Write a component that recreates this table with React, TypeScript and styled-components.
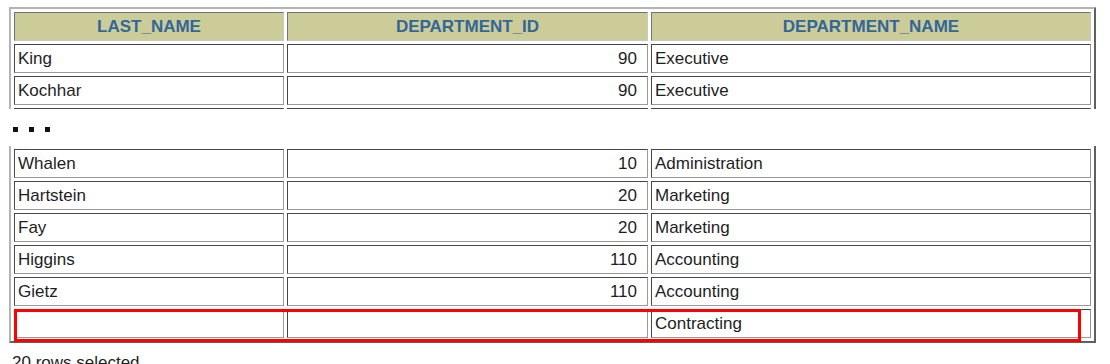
import styled, { createGlobalStyle } from "styled-components";

const GlobalStyle = createGlobalStyle`
  html, body {
    margin: 0;
    padding: 0;
    background: #ffffff;
  }
  body {
    font-family: "Liberation Sans", Arial, sans-serif;
  }
`;

const Page = styled.div`
  width: 1110px;
  height: 364px;
  overflow: hidden;
  box-sizing: border-box;
  padding: 7px 0 0 9px;
  display: flex;
  flex-direction: column;
  & > * {
    flex-shrink: 0;
  }
`;

// a cut-out excerpt of a longer result table
const Clip = styled.div<{ $height: number }>`
  position: relative;
  height: ${(p) => p.$height}px;
  overflow: hidden;
`;

const Table = styled.table<{ $cutTop?: boolean }>`
  table-layout: fixed;
  border-collapse: separate;
  border-spacing: 3px;
  border: 2px outset #b4b4b4;
  border-top-width: ${(p) => (p.$cutTop ? 0 : 2)}px;
`;

const HeadCell = styled.th<{ $w: number }>`
  box-sizing: border-box;
  width: ${(p) => p.$w}px;
  height: 29px;
  padding: 0;
  background: #cccc99;
  color: #336699;
  font-size: 17px;
  font-weight: bold;
  text-align: center;
  vertical-align: middle;
  border: 1px inset #c8c8c8;
`;

const Cell = styled.td<{ $num?: boolean }>`
  box-sizing: border-box;
  height: 29px;
  padding: 0 ${(p) => (p.$num ? "10px" : "0")} 0 ${(p) => (p.$num ? "0" : "3px")};
  text-align: ${(p) => (p.$num ? "right" : "left")};
  vertical-align: middle;
  font-size: 17px;
  color: #1e1e1e;
  white-space: nowrap;
  border: 1px inset #9a9a9a;
  background: #ffffff;
`;

const Dots = styled.div`
  display: flex;
  gap: 11px;
  margin: 18px 0 14px 4px;
`;

const Dot = styled.span`
  width: 5px;
  height: 5px;
  background: #111111;
`;

const Highlight = styled.div`
  position: absolute;
  left: 5px;
  top: 163px;
  width: 1067px;
  height: 33px;
  box-sizing: border-box;
  border: 3px solid #ff0000;
  pointer-events: none;
`;

const Footer = styled.div`
  margin: 10px 0 0 3px;
  font-size: 17px;
  line-height: 20px;
  color: #1e1e1e;
`;

type Row = [string, string, string];

const widths = [270, 361, 440];

const topRows: Row[] = [
  ["King", "90", "Executive"],
  ["Kochhar", "90", "Executive"],
  ["", "", ""],
];

const bottomRows: Row[] = [
  ["Whalen", "10", "Administration"],
  ["Hartstein", "20", "Marketing"],
  ["Fay", "20", "Marketing"],
  ["Higgins", "110", "Accounting"],
  ["Gietz", "110", "Accounting"],
  ["", "", "Contracting"],
];

function Body({ rows }: { rows: Row[] }) {
  return (
    <tbody>
      {rows.map((r, i) => (
        <tr key={i}>
          <Cell style={{ width: widths[0] }}>{r[0]}</Cell>
          <Cell $num style={{ width: widths[1] }}>
            {r[1]}
          </Cell>
          <Cell style={{ width: widths[2] }}>{r[2]}</Cell>
        </tr>
      ))}
    </tbody>
  );
}

export default function App() {
  return (
    <>
      <GlobalStyle />
      <Page>
        <Clip $height={102}>
          <Table>
            <thead>
              <tr>
                <HeadCell $w={widths[0]}>LAST_NAME</HeadCell>
                <HeadCell $w={widths[1]}>DEPARTMENT_ID</HeadCell>
                <HeadCell $w={widths[2]}>DEPARTMENT_NAME</HeadCell>
              </tr>
            </thead>
            <Body rows={topRows} />
          </Table>
        </Clip>
        <Dots>
          <Dot />
          <Dot />
          <Dot />
        </Dots>
        <Clip $height={197}>
          <Table $cutTop>
            <Body rows={bottomRows} />
          </Table>
          <Highlight />
        </Clip>
        <Footer>20 rows selected.</Footer>
      </Page>
    </>
  );
}
